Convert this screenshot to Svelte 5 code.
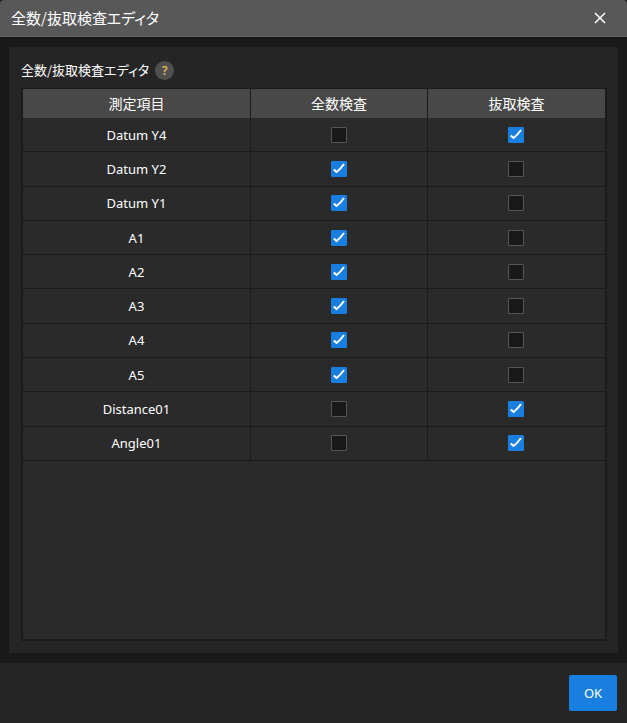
<script>
    let items = $state([
        { name: 'Datum Y4', full: false, sampling: true },
        { name: 'Datum Y2', full: true, sampling: false },
        { name: 'Datum Y1', full: true, sampling: false },
        { name: 'A1', full: true, sampling: false },
        { name: 'A2', full: true, sampling: false },
        { name: 'A3', full: true, sampling: false },
        { name: 'A4', full: true, sampling: false },
        { name: 'A5', full: true, sampling: false },
        { name: 'Distance01', full: false, sampling: true },
        { name: 'Angle01', full: false, sampling: true }
    ]);

    // an item is inspected one way or the other, never both
    const choose = (item, full) => {
        item.full = full;
        item.sampling = !full;
    };
</script>

{#snippet check(item, checked, full, label)}
    <label class="check">
        <input type="checkbox" {checked} aria-label="{item.name} {label}" onchange={() => choose(item, full ? !item.full : item.sampling)} />
        <svg viewBox="0 0 16 16" aria-hidden="true">
            <path d="M2.8 8.4 L5.6 11 Q9 8.6 13 3" />
        </svg>
    </label>
{/snippet}

<div class="dialog">
    <header>
        <h1>全数/抜取検査エディタ</h1>
        <button class="close" aria-label="閉じる">
            <svg viewBox="0 0 12 12" aria-hidden="true">
                <path d="M1 1 L11 11 M11 1 L1 11" />
            </svg>
        </button>
    </header>

    <main>
        <section>
            <div class="caption">
                <h2>全数/抜取検査エディタ</h2>
                <button class="help" aria-label="ヘルプ">?</button>
            </div>
            <div class="list">
                <table>
                    <thead>
                        <tr>
                            <th class="name">測定項目</th>
                            <th>全数検査</th>
                            <th>抜取検査</th>
                        </tr>
                    </thead>
                    <tbody>
                        {#each items as item}
                            <tr>
                                <td>{item.name}</td>
                                <td>{@render check(item, item.full, true, '全数検査')}</td>
                                <td>{@render check(item, item.sampling, false, '抜取検査')}</td>
                            </tr>
                        {/each}
                    </tbody>
                </table>
            </div>
        </section>
    </main>

    <footer>
        <button class="ok">OK</button>
    </footer>
</div>

<style>
    :global(body) {
        margin: 0;
        background: #191919;
    }

    .dialog {
        display: flex;
        flex-direction: column;
        min-height: 100vh;
        box-sizing: border-box;
        color: #fff;
        font-family: "Noto Sans", "Noto Sans CJK JP", sans-serif;
        font-size: 13px;
        line-height: 20px;
    }

    button {
        padding: 0;
        border: 0;
        color: inherit;
        font: inherit;
        cursor: pointer;
    }

    header {
        display: flex;
        align-items: center;
        justify-content: space-between;
        height: 37px;
        padding: 0 21px 0 11px;
        box-sizing: border-box;
        border-bottom: 1px solid #636363;
        border-radius: 4px 4px 0 0;
        background: #585858;
    }

    h1, h2 {
        margin: 0;
        font-family: "Noto Sans CJK JP", sans-serif;
        font-weight: 400;
        font-feature-settings: "palt";
    }
    h1 {
        font-size: 15px;
    }
    h2 {
        font-size: 13px;
    }

    .close {
        display: flex;
        background: none;
    }
    .close svg {
        width: 12px;
        height: 12px;
        fill: none;
        stroke: #fff;
        stroke-width: 1.5;
    }

    main {
        display: flex;
        flex: 1;
        padding: 10px 9px;
    }

    section {
        display: flex;
        flex: 1;
        flex-direction: column;
        padding: 13px 11px 12px 12px;
        background: #252525;
    }

    .caption {
        display: flex;
        align-items: center;
        gap: 6px;
        padding-bottom: 8px;
    }

    .help {
        width: 19px;
        height: 19px;
        border-radius: 50%;
        background: #4f4f4f;
        color: #e3bd58;
        font-size: 12px;
        font-weight: 600;
        line-height: 19px;
    }

    .list {
        flex: 1;
        border: 2px solid #1b1b1b;
        border-top-width: 1px;
        background: #2a2a2a;
    }

    table {
        width: 100%;
        height: 372px;
        border-collapse: separate;
        border-spacing: 0;
        table-layout: fixed;
    }

    th, td {
        padding: 0;
        text-align: center;
        border-right: 1px solid #1b1b1b;
    }
    th:last-child, td:last-child {
        border-right: 0;
    }
    th {
        height: 28px;
        padding-bottom: 1px;
        background: #484848;
        font-family: "Noto Sans CJK JP", sans-serif;
        font-size: 14px;
        font-weight: 400;
    }
    td {
        border-bottom: 1px solid #1b1b1b;
    }
    .name {
        width: 39%;
    }

    .check {
        display: grid;
        justify-content: center;
    }
    .check input, .check svg {
        grid-area: 1 / 1;
        width: 16px;
        height: 16px;
    }
    .check input {
        margin: 0;
        appearance: none;
        box-sizing: border-box;
        border: 1px solid #555;
        border-radius: 1px;
        background: #191919;
    }
    .check input:checked {
        border-color: #187fe0;
        background: #187fe0;
    }
    .check svg {
        visibility: hidden;
        pointer-events: none;
        fill: none;
        stroke: #fff;
        stroke-width: 2;
    }
    .check input:checked + svg {
        visibility: visible;
    }

    footer {
        display: flex;
        justify-content: flex-end;
        padding: 12px 10px;
        background: #252525;
    }

    .ok {
        width: 48px;
        height: 36px;
        border-radius: 2px;
        background: #187fe0;
    }
</style>
